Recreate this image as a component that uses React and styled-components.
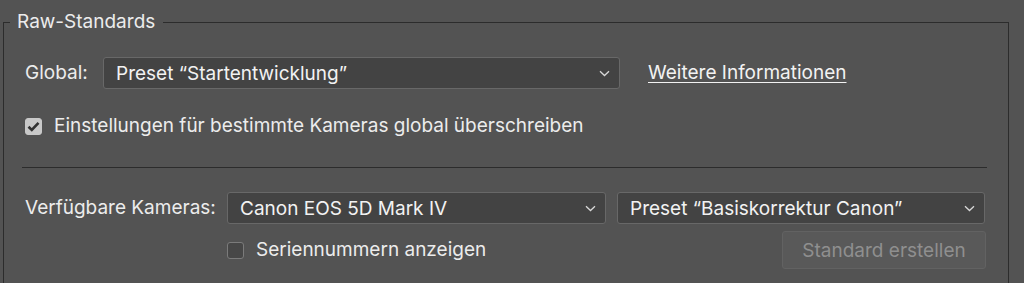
import styled, { createGlobalStyle } from "styled-components";

const GlobalStyle = createGlobalStyle`
    html, body {
        margin: 0;
        background: #535353;
        overflow: hidden;
    }
    body {
        font-family: Inter, "Noto Sans", sans-serif;
        color: #ececec;
        -webkit-font-smoothing: antialiased;
    }
`;

const Fieldset = styled.fieldset`
    margin: 11px 0 0 3px;
    width: 1006px;
    min-width: 0;
    height: 272px;
    box-sizing: border-box;
    padding: 0 21px 0 21px;
    border: 1px solid #2c2c2c;
    border-bottom: none;
`;

const Legend = styled.legend`
    margin-left: -15px;
    padding: 0 8px 0 7px;
    font-size: 19px;
    line-height: 22px;
    color: #ececec;
`;

const Row = styled.div`
    display: flex;
    align-items: center;
    margin-top: ${p => p.$top || 0}px;
`;

const Label = styled.span`
    font-size: 19px;
    line-height: 22px;
    color: #ececec;
    width: ${p => (p.$width ? `${p.$width}px` : "auto")};
    flex-shrink: 0;
`;

const Select = styled.div`
    display: flex;
    align-items: center;
    justify-content: space-between;
    box-sizing: border-box;
    width: ${p => p.$width}px;
    height: 32px;
    padding: 0 9px 0 12px;
    background: #434343;
    border: 1px solid #686868;
    border-radius: 3px;
    font-size: 19px;
    color: #f2f2f2;
`;

const Link = styled.a`
    margin-left: 28px;
    font-size: 19px;
    line-height: 22px;
    color: #f2f2f2;
    text-decoration: underline;
    text-underline-offset: 3px;
    text-decoration-thickness: 1px;
`;

const Check = styled.label`
    display: flex;
    align-items: center;
    gap: 12px;
    font-size: 19px;
    line-height: 22px;
    color: #ececec;
`;

const Box = styled.span`
    display: flex;
    align-items: center;
    justify-content: center;
    box-sizing: border-box;
    width: 17px;
    height: 17px;
    border-radius: 3px;
    background: ${p => (p.$checked ? "#c9c9c9" : "#474747")};
    border: 1px solid ${p => (p.$checked ? "#c9c9c9" : "#7b7b7b")};
`;

const Separator = styled.hr`
    margin: 30px 0 0 -3px;
    width: 965px;
    height: 0;
    border: none;
    border-top: 1px solid #2c2c2c;
`;

const Grid = styled.div`
    display: grid;
    grid-template-columns: 191px 379px 368px;
    column-gap: 11px;
    row-gap: 7px;
    align-items: center;
    margin-top: 24px;
`;

const Button = styled.button`
    justify-self: end;
    width: 204px;
    height: 38px;
    margin-right: -1px;
    background: #595959;
    border: 1px solid #626262;
    border-radius: 3px;
    font-family: inherit;
    font-size: 19px;
    color: #8f8f8f;
`;

const Chevron = () => (
    <svg width="11" height="7" viewBox="0 0 11 7" fill="none">
        <path d="M1 1.2 L5.5 5.5 L10 1.2" stroke="#d8d8d8" strokeWidth="1.3" />
    </svg>
);

const Tick = () => (
    <svg width="13" height="11" viewBox="0 0 13 11" fill="none">
        <path d="M1.5 5.8 L4.8 9 L11.5 1.8" stroke="#333" strokeWidth="2.6" />
    </svg>
);

const App = () => {
    return (
        <>
            <GlobalStyle />
            <Fieldset>
                <Legend>Raw-Standards</Legend>
                <Row $top={24}>
                    <Label $width={78}>Global:</Label>
                    <Select $width={517}>
                        <span>Preset “Startentwicklung”</span>
                        <Chevron />
                    </Select>
                    <Link>Weitere Informationen</Link>
                </Row>
                <Row $top={26}>
                    <Check>
                        <Box $checked><Tick /></Box>
                        Einstellungen für bestimmte Kameras global überschreiben
                    </Check>
                </Row>
                <Separator />
                <Grid>
                    <Label>Verfügbare Kameras:</Label>
                    <Select $width={379}>
                        <span>Canon EOS 5D Mark IV</span>
                        <Chevron />
                    </Select>
                    <Select $width={368}>
                        <span>Preset “Basiskorrektur Canon”</span>
                        <Chevron />
                    </Select>
                    <span />
                    <Check>
                        <Box />
                        Seriennummern anzeigen
                    </Check>
                    <Button disabled>Standard erstellen</Button>
                </Grid>
            </Fieldset>
        </>
    );
}

export default App;
